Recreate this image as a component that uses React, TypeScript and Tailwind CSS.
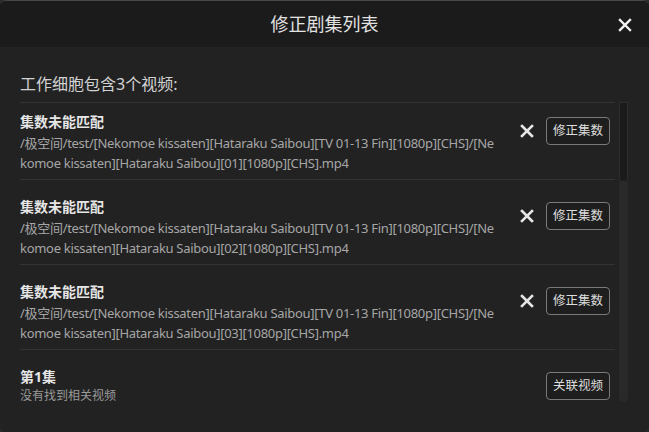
import React from "react";

const FONT = '"Segoe UI", "Noto Sans", "Noto Sans CJK SC", sans-serif';

function XIcon({ size = 14, color = "#e5e5e5", sw = 2.6 }: { size?: number; color?: string; sw?: number }) {
  return (
    <svg width={size} height={size} viewBox="0 0 14 14" fill="none">
      <path d="M2 2 L12 12 M12 2 L2 12" stroke={color} strokeWidth={sw} strokeLinecap="square" />
    </svg>
  );
}

type Item = { title: string; lines?: string[]; sub?: string; btn: string; x: boolean; first?: boolean };

const path = (n: string) =>
  `/极空间/test/[Nekomoe kissaten][Hataraku Saibou][TV 01-13 Fin][1080p][CHS]/[Nekomoe kissaten][Hataraku Saibou][${n}][1080p][CHS].mp4`;

const items: Item[] = [
  { title: "集数未能匹配", lines: [path("01")], btn: "修正集数", x: true, first: true },
  { title: "集数未能匹配", lines: [path("02")], btn: "修正集数", x: true },
  { title: "集数未能匹配", lines: [path("03")], btn: "修正集数", x: true },
  { title: "第1集", sub: "没有找到相关视频", btn: "关联视频", x: false },
];

function Row({ it }: { it: Item }) {
  return (
    <div className={`flex items-start border-b border-[#333333] pb-[6px] ${it.first ? "pt-[8px]" : "pt-[16px]"}`}>
      <div className="w-[478px] shrink-0">
        <div className="text-[14px] leading-[22px] font-bold text-[#e6e6e6]">{it.title}</div>
        {it.lines && (
          <div className="text-[13px] leading-[20px] tracking-[-0.3px] text-[#a6a6a6] break-all">{it.lines[0]}</div>
        )}
        {it.sub && <div className="text-[12px] leading-[16px] text-[#9a9a9a]">{it.sub}</div>}
      </div>
      <div className="ml-auto mt-[6px] flex items-center mr-[5px]">
        {it.x && (
          <div className="mr-[12px] flex items-center">
            <XIcon size={14} />
          </div>
        )}
        <div className="h-[28px] w-[64px] rounded-[4px] border border-[#7a7a7a] bg-[#1e1e1e] flex items-center justify-center text-[12.5px] text-[#dddddd]">
          {it.btn}
        </div>
      </div>
    </div>
  );
}

export default function App() {
  return (
    <div className="w-[649px] h-[432px] bg-[#2a2a2a] overflow-hidden" style={{ fontFamily: FONT }}>
      <div className="h-full w-full rounded-[6px] border-t border-[#474747] bg-[#222222] flex flex-col overflow-hidden">
        <div className="relative h-[46px] shrink-0 bg-[#1b1b1b] flex items-center justify-center">
          <div className="text-[18px] text-[#e2e2e2]">修正剧集列表</div>
          <div className="absolute right-[17px] top-[17px]">
            <XIcon size={14} color="#f2f2f2" sw={2.4} />
          </div>
        </div>
        <div className="px-[20px] pt-[25px]">
          <div className="text-[16px] leading-[24px] text-[#d2d2d2]">工作细胞包含3个视频:</div>
          <div className="mt-[6px] flex items-start">
            <div className="w-[595px] h-[306px] overflow-hidden border-t border-[#333333]">
              {items.map((it, i) => (
                <Row key={i} it={it} />
              ))}
            </div>
            <div className="ml-[4px] w-[9px] h-[300px] flex flex-col">
              <div className="h-[80px] rounded-b-[4px] bg-[#1a1a1a] border border-[#2e2e2e]" />
              <div className="flex-1 rounded-b-full bg-[#292929]" />
            </div>
          </div>
        </div>
      </div>
    </div>
  );
}
